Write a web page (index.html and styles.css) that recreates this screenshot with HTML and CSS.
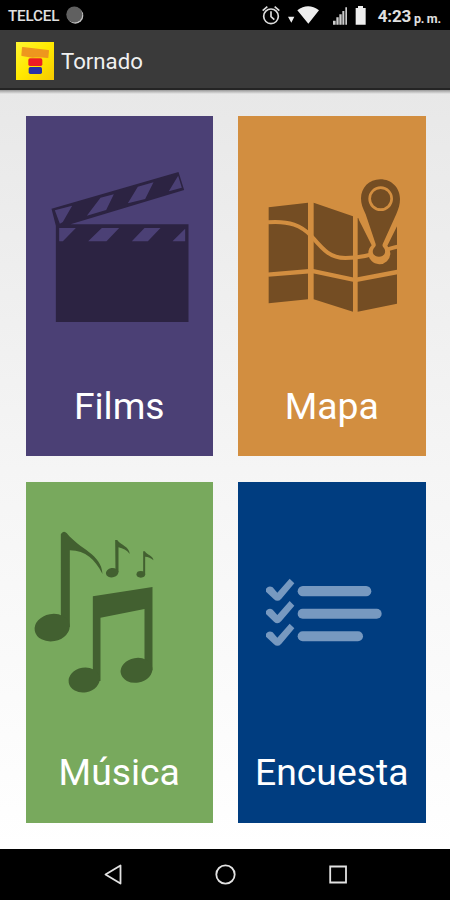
FILE: index.html
```html
<!DOCTYPE html>
<html lang="es">
<head>
<meta charset="utf-8">
<title>Tornado</title>
<link rel="stylesheet" href="styles.css">
</head>
<body>
<header class="status">
  <span class="carrier">TELCEL</span>
  <svg class="sync" width="20" height="20" viewBox="0 0 20 20"><circle cx="10.3" cy="10.7" r="8" fill="#c4c4c4"/><circle cx="9.3" cy="9.5" r="8" fill="#606060"/></svg>
  <svg class="indicators" width="112" height="30" viewBox="0 0 336 90">
    <g fill="none" stroke="#ddd" stroke-width="5"><circle cx="48" cy="49" r="22"/><path d="M48 34v16l10 9M23 32l14-12M73 32L59 20"/></g>
    <g fill="#eee"><path d="M99 50h19l-9 18zM127 31Q159 6 192 31L160 71z"/><path d="M302 24h7v-6h15v6h8v50h-30z"/></g>
    <path d="M234 62h8v12h-8zM244 52h7v22h-7zM253 43h7v31h-7zM262 33h6v41h-6zM271 22h5v52h-5z" fill="#ccc"/>
  </svg>
  <span class="time">4:23</span><span class="ampm">p. m.</span>
</header>
<div class="appbar">
  <svg class="logo" width="38" height="38" viewBox="0 0 114 114">
    <defs><linearGradient id="gold" x1="0" y1="0" x2="1" y2="1"><stop offset="0" stop-color="#fff633"/><stop offset=".5" stop-color="#ffe900"/><stop offset="1" stop-color="#f7c900"/></linearGradient></defs>
    <path fill="url(#gold)" d="M0 0h114v114H0z"/>
    <path fill="#ee961e" stroke="#ee961e" stroke-width="4" stroke-linejoin="round" d="M20 17l77 9-2 20-24-2-22 1-31-5z"/>
    <rect x="37" y="49" width="42" height="23" rx="5" fill="#ee1c24"/>
    <rect x="38" y="75" width="40" height="21" rx="5" fill="#2930a5"/>
  </svg>
  <h1>Tornado</h1>
</div>
<main class="tiles">
  <a class="tile films">
    <svg viewBox="25.5 116 187.5 268"><g transform="translate(20 160) scale(.33333)">
      <path fill="#2c2342" d="M93 146L474 36l17 54-341 103h354v293H106V197z"/>
      <g fill="#4b4075"><path d="M103 151l52-14-28 49-9 5zM240 113l40-10-23 47-58 17zM352 80l47-13-25 50-52 13zM473 47l11 36-39 11z"/><path d="M116 204h50l-39 40h-11zM244 204h52l-38 40h-55zM372 204h48l-38 40h-48zM494 206v38h-38z"/></g>
    </g></svg>
    <span>Films</span>
  </a>
  <a class="tile mapa">
    <svg viewBox="238 116 187.5 268"><g transform="translate(235 160) scale(.33333)">
      <path fill="#744d23" d="M101 142l118-14v290l-118 12zM236 128l118 41v286l-118-37zM368 174l118 24v233l-118 24z"/>
      <g fill="none" stroke="#d28e40">
        <path stroke-width="12" d="M99 187c65-5 100 10 130 41 35 40 55 66 102 66 65 0 100-20 157-34"/>
        <path stroke-width="13" d="M99 344l132-11 130 27 126-24"/>
      </g>
      <path fill="#d28e40" d="M366 160l6 20 38 76a33 33 0 1 0 47 1l32-64v-43z"/>
      <path fill="#744d23" d="M436 58c-34 0-58 26-58 57 0 17 5 29 14 48l29 86c3 8 0 9-2 13-12 13-4 28 13 28s24-16 13-28c-4-5-3-8 1-16l38-84c7-16 11-30 11-45 0-33-25-59-59-59z"/>
      <circle cx="437" cy="116" r="33" fill="none" stroke="#d28e40" stroke-width="8"/>
    </g></svg>
    <span>Mapa</span>
  </a>
  <a class="tile musica">
    <svg viewBox="25.5 482 187.5 268"><g transform="translate(20 520) scale(.33333)" fill="#426030">
      <path d="M121 43c5-9 12-10 18-3 39 49 104 62 107 122-24-45-49-69-98-71v230h-27z"/><ellipse cx="95" cy="323" rx="53" ry="41" transform="rotate(-10 95 323)"/>
      <path d="M217 229l179-28v250h-24V267l-132 26v190h-23z"/><ellipse cx="191" cy="480" rx="47" ry="37" transform="rotate(-10 191 480)"/><ellipse cx="348" cy="451" rx="48" ry="37" transform="rotate(-10 348 451)"/>
      <path d="M284 60h6c13 18 35 17 38 42-10-12-20-17-34-20v75h-9z"/><ellipse cx="275" cy="158" rx="19" ry="14" transform="rotate(-10 275 158)"/>
      <path d="M368 94h5c6 11 24 12 26 27-9-8-15-10-25-11v53h-6z"/><ellipse cx="361" cy="163" rx="13" ry="10"/>
    </g></svg>
    <span>Música</span>
  </a>
  <a class="tile encuesta">
    <svg viewBox="238 482 187.5 268"><g transform="translate(235 560) scale(.33333)" fill="#7799c0">
      <path id="check" d="M93 86q9-11 20-4l14 16 37-42 14 14-39 46q-11 12-22 2L93 95z"/>
      <use href="#check" y="67"/><use href="#check" y="135"/>
      <rect x="188" y="78" width="221" height="31" rx="15.5"/><rect x="188" y="146" width="252" height="30" rx="15"/><rect x="188" y="214" width="196" height="30" rx="15"/>
    </g></svg>
    <span>Encuesta</span>
  </a>
</main>
<nav class="navbar">
  <svg width="450" height="51" viewBox="0 0 450 51" fill="none" stroke="#e2e2e2" stroke-width="1.8"><path stroke-linejoin="round" d="M105.5 25.5l15-9v18z"/><circle cx="225.5" cy="25.5" r="9.2"/><path d="M330.2 17.5h15.8v16h-15.8z"/></svg>
</nav>
</body>
</html>
```
FILE: styles.css
```css
* { box-sizing: border-box; }
body {
  margin: 0;
  width: 450px;
  height: 900px;
  display: flex;
  flex-direction: column;
  overflow: hidden;
  font-family: Roboto, sans-serif;
  background: #000;
}
svg { display: block; flex: none; }
.status {
  height: 30px;
  display: flex;
  align-items: center;
  padding: 0 9px 0 8px;
  color: #e0e0e0;
  background: #000;
}
.carrier { width: 57px; font-size: 15.2px; font-weight: 500; letter-spacing: -.15px; padding-top: 2px; }
.indicators { margin-left: 170px; }
.time { margin-left: auto; font-size: 17px; font-weight: 700; letter-spacing: -.2px; padding-top: 2px; }
.ampm { width: 27px; margin-left: 3px; font-size: 12.5px; font-weight: 700; padding-top: 6px; white-space: nowrap; letter-spacing: -.3px; }
.appbar {
  height: 60px;
  display: flex;
  align-items: center;
  padding-left: 16px;
  gap: 7px;
  background: #3a3a3a;
  border-bottom: 2px solid #242424;
}
.logo { margin-top: 4px; }
h1 { margin: 0; color: #f0f0f0; font-size: 22.2px; font-weight: 400; line-height: 26px; padding-top: 4px; }
.tiles {
  height: 758.5px;
  padding: 26px 24.5px 25px 25.5px;
  display: grid;
  grid-template-columns: 187.5px 187.5px;
  grid-template-rows: 340px 341px;
  gap: 26px 25px;
  background: linear-gradient(#999, rgba(187, 187, 187, 0) 4px), linear-gradient(#e8e8e8, #f5f5f5 50%, #fff);
}
.tile {
  display: flex;
  flex-direction: column;
  color: #fff;
  text-align: center;
  font-size: 37.3px;
  line-height: 44px;
}
.tile svg { width: 187.5px; height: 268px; }
.films { background: #4b4075; }
.mapa { background: #d28e40; }
.musica { background: #78a95d; }
.encuesta { background: #003d80; }
.navbar { height: 51.5px; background: #000; }
```
